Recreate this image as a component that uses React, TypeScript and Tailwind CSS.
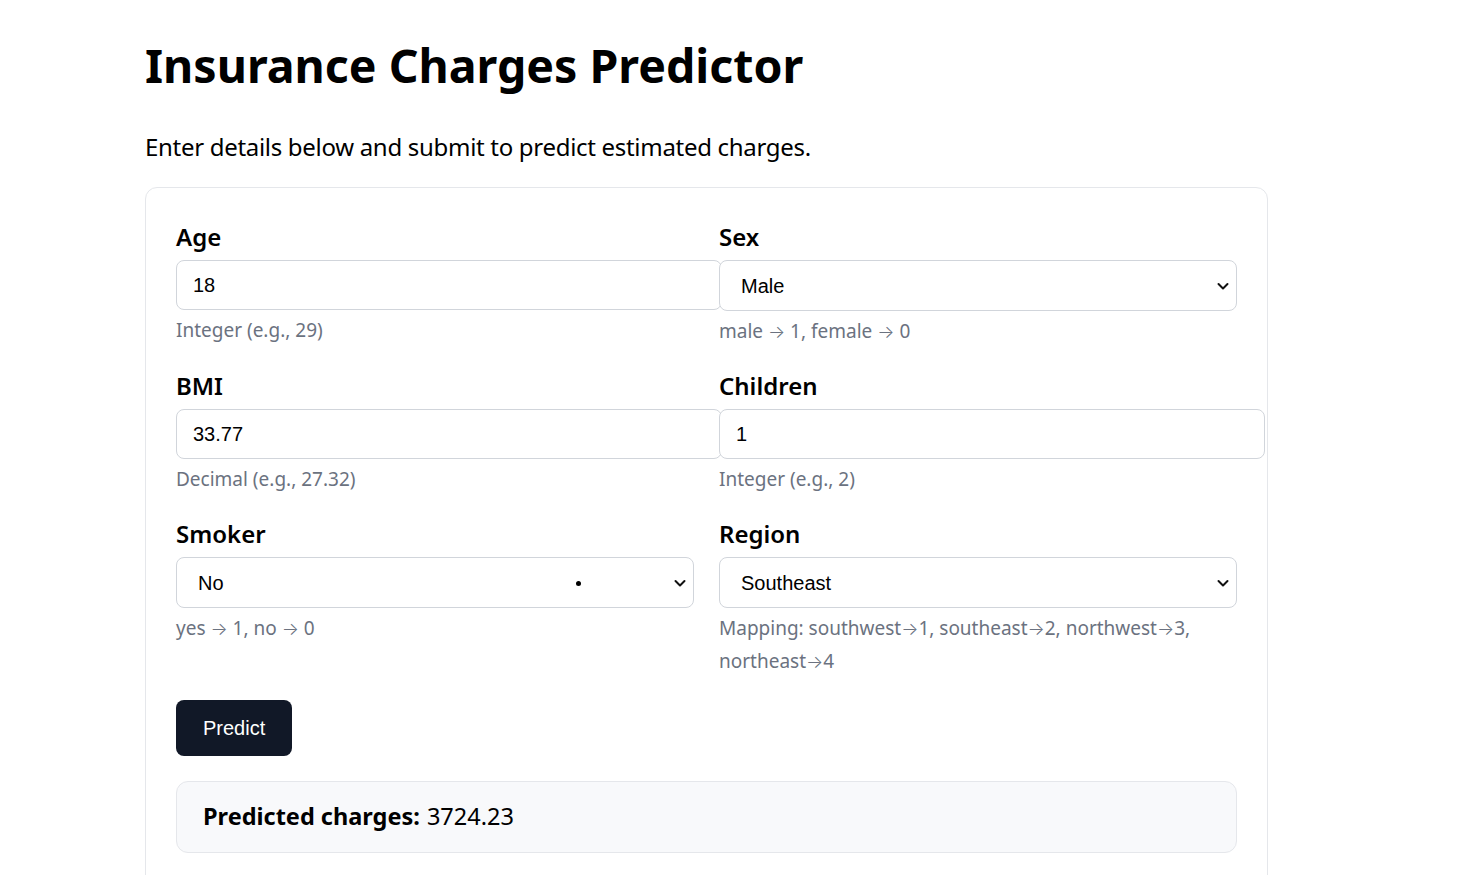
import React from "react";

const Chevron = () => (
  <svg width="14" height="14" viewBox="0 0 14 14" className="pointer-events-none absolute right-[6px] top-1/2 -translate-y-1/2">
    <path d="M2.5 5 L7 9.5 L11.5 5" fill="none" stroke="#111" strokeWidth="2" strokeLinecap="round" strokeLinejoin="round" />
  </svg>
);

const Arrow = () => <span className="text-[18px] leading-none font-light [font-family:Inter,sans-serif]">→</span>;

const Label = ({ children }: { children: React.ReactNode }) => (
  <div className="mb-2 text-[24px] leading-[30px] font-semibold text-black [font-family:'Noto_Sans',sans-serif]">{children}</div>
);

const Hint = ({ children }: { children: React.ReactNode }) => (
  <div className="mt-1 text-[19px] leading-[33px] text-[#6b7280] [font-family:'Noto_Sans',sans-serif]">{children}</div>
);

const TextInput = ({ value }: { value: string }) => (
  <input
    defaultValue={value}
    className="box-border block h-[50px] w-[calc(100%+28px)] rounded-[8px] border border-[#d1d5db] bg-white px-4 text-[20px] text-black outline-none [font-family:'Liberation_Sans',Arial,sans-serif]"
  />
);

const Select = ({ value, dot }: { value: string; dot?: boolean }) => (
  <div className="relative h-[51px] w-full rounded-[8px] border border-[#d1d5db] bg-white">
    <div className="flex h-full items-center pl-[21px] text-[20px] text-black [font-family:'Liberation_Sans',Arial,sans-serif]">{value}</div>
    {dot && <span className="absolute left-[399px] top-[23px] h-[5px] w-[5px] rounded-full bg-black" />}
    <Chevron />
  </div>
);

export default function App() {
  return (
    <div className="min-h-screen bg-white [font-family:'Noto_Sans',sans-serif]">
      <div className="ml-[145px] w-[1123px] pt-[30px]">
        <h1 className="text-[46.5px] leading-[70px] font-bold text-black">Insurance Charges Predictor</h1>
        <p className="mt-[32px] text-[24px] leading-[30px] tracking-[-0.3px] text-black">Enter details below and submit to predict estimated charges.</p>
        <div className="mt-[25px] rounded-[12px] border border-[#e5e7eb] px-[30px] pt-[34px] pb-10">
          <div className="grid grid-cols-2 gap-x-[25px] gap-y-[23px]">
            <div>
              <Label>Age</Label>
              <TextInput value="18" />
              <Hint>Integer (e.g., 29)</Hint>
            </div>
            <div>
              <Label>Sex</Label>
              <Select value="Male" />
              <Hint>male <Arrow /> 1, female <Arrow /> 0</Hint>
            </div>
            <div>
              <Label>BMI</Label>
              <TextInput value="33.77" />
              <Hint>Decimal (e.g., 27.32)</Hint>
            </div>
            <div>
              <Label>Children</Label>
              <TextInput value="1" />
              <Hint>Integer (e.g., 2)</Hint>
            </div>
            <div>
              <Label>Smoker</Label>
              <Select value="No" dot />
              <Hint>yes <Arrow /> 1, no <Arrow /> 0</Hint>
            </div>
            <div>
              <Label>Region</Label>
              <Select value="Southeast" />
              <Hint>
                Mapping: southwest<Arrow />1, southeast<Arrow />2, northwest<Arrow />3, northeast<Arrow />4
              </Hint>
            </div>
          </div>
          <button className="mt-[22px] h-[56px] rounded-[8px] bg-[#111827] px-[27px] text-[20px] text-white [font-family:'Liberation_Sans',Arial,sans-serif]">
            Predict
          </button>
          <div className="mt-[25px] flex h-[72px] items-center rounded-[12px] border border-[#e5e7eb] bg-[#f8f9fb] px-[26px] text-[23.5px] text-black">
            <span className="font-bold">Predicted charges:</span>
            <span className="ml-[7px]">3724.23</span>
          </div>
        </div>
      </div>
    </div>
  );
}
